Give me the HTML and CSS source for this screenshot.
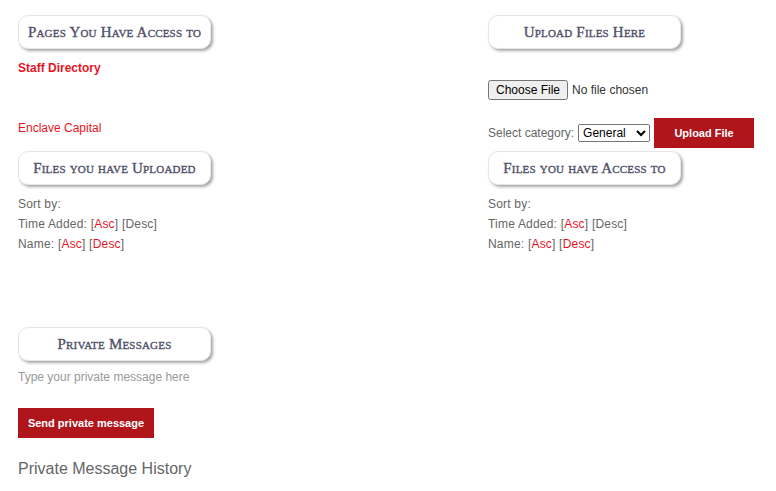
FILE: index.html
```html
<!DOCTYPE html>
<html lang="en">
<head>
  <meta charset="UTF-8">
  <title>Dashboard</title>
  <link rel="stylesheet" href="styles.css">
</head>
<body>
  <div class="pagina">
    <div class="grade">
      <div class="coluna">
        <h2 class="titulo">Pages You Have Access to</h2>
        <a class="link link-forte" href="#">Staff Directory</a>
        <a class="link link-baixo" href="#">Enclave Capital</a>
      </div>

      <div class="coluna">
        <h2 class="titulo">Upload Files Here</h2>
        <div class="arquivo">
          <input type="file" id="arquivo">
        </div>
        <div class="categoria">
          <label for="categoria">Select category:</label>
          <select id="categoria">
            <option>General</option>
          </select>
          <button class="botao botao-upload">Upload File</button>
        </div>
      </div>

      <div class="coluna">
        <h2 class="titulo">Files you have Uploaded</h2>
        <div class="ordem">
          <div>Sort by:</div>
          <div>Time Added: [<a href="#">Asc</a>] [Desc]</div>
          <div>Name: [<a href="#">Asc</a>] [<a href="#">Desc</a>]</div>
        </div>
      </div>

      <div class="coluna">
        <h2 class="titulo">Files you have Access to</h2>
        <div class="ordem">
          <div>Sort by:</div>
          <div>Time Added: [<a href="#">Asc</a>] [Desc]</div>
          <div>Name: [<a href="#">Asc</a>] [<a href="#">Desc</a>]</div>
        </div>
      </div>
    </div>

    <div class="mensagens">
      <h2 class="titulo">Private Messages</h2>
      <textarea class="mensagem" placeholder="Type your private message here"></textarea>
      <button class="botao botao-enviar">Send private message</button>
      <div class="historico">Private Message History</div>
    </div>
  </div>
</body>
</html>
```

FILE: styles.css
```css
body {
  margin: 0;
  font-family: "Liberation Sans", Arial, sans-serif;
  font-size: 12px;
  color: #666;
  background-color: #fff;
}
.pagina {
  padding: 15px 0 0 18px;
}
.grade {
  display: grid;
  grid-template-columns: 470px 1fr;
  grid-template-rows: 136px auto;
}
.coluna {
  display: flex;
  flex-direction: column;
  align-items: flex-start;
}
.titulo {
  box-sizing: border-box;
  width: 193px;
  height: 34px;
  margin: 0;
  border: 1px solid #e6e6e6;
  border-radius: 10px;
  box-shadow: 2px 2px 3px rgba(0, 0, 0, 0.35);
  background-color: #fff;
  font-family: "Liberation Serif", "Times New Roman", serif;
  font-variant: small-caps;
  font-weight: normal;
  font-size: 15px;
  letter-spacing: 0.2px;
  line-height: 32px;
  text-align: center;
  color: #4f5068;
  -webkit-text-stroke: 0.35px #4f5068;
  white-space: nowrap;
}
.link {
  color: #e8151f;
  text-decoration: none;
  line-height: 16px;
}
.link-forte {
  font-weight: bold;
  margin-top: 11px;
}
.link-baixo {
  margin-top: 44px;
}
.arquivo {
  margin-top: 31px;
  height: 18px;
}
.arquivo input {
  font-family: "Liberation Sans", Arial, sans-serif;
  font-size: 12px;
  color: #333;
}
.categoria {
  display: flex;
  align-items: center;
  margin-top: 20px;
  height: 30px;
}
.categoria label {
  margin-right: 4px;
}
.categoria select {
  width: 72px;
  height: 18px;
  font-size: 12px;
  margin-right: 4px;
}
.botao {
  border: none;
  background-color: #b0151b;
  color: #fff;
  font-family: "Liberation Sans", Arial, sans-serif;
  font-weight: bold;
  font-size: 11px;
  cursor: pointer;
}
.botao-upload {
  width: 100px;
  height: 30px;
}
.ordem {
  margin-top: 9px;
  line-height: 20px;
  letter-spacing: 0.2px;
}
.ordem a {
  color: #e8151f;
  text-decoration: none;
}
.mensagens {
  margin-top: 73px;
}
.mensagem {
  display: block;
  width: 400px;
  height: 22px;
  margin-top: 5px;
  padding: 0;
  border: none;
  resize: none;
  outline: none;
  font-family: "Liberation Sans", Arial, sans-serif;
  font-size: 12px;
  line-height: 22px;
}
.mensagem::placeholder {
  color: #999;
}
.botao-enviar {
  display: block;
  width: 136px;
  height: 30px;
  margin-top: 20px;
}
.historico {
  margin-top: 22px;
  font-size: 16px;
  color: #666;
}
```
